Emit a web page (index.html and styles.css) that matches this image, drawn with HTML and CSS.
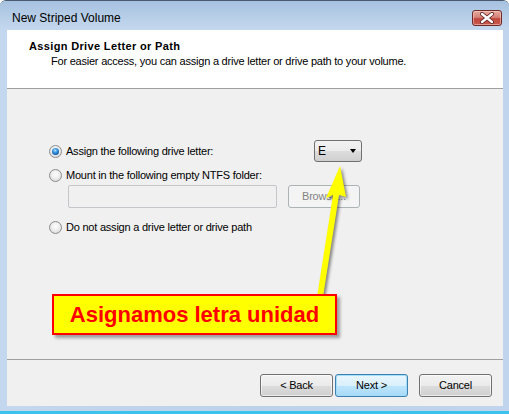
FILE: index.html
```html
<!DOCTYPE html>
<html>
<head>
<meta charset="utf-8">
<link rel="stylesheet" href="styles.css">
</head>
<body>
<div class="window">
  <div class="titlebar">
    <span class="title">New Striped Volume</span>
    <div class="close">
      <svg width="16" height="12" viewBox="0 0 16 12">
        <path d="M3 2 L13 10 M13 2 L3 10" stroke="#5a1f1f" stroke-width="4" stroke-linecap="round"/>
        <path d="M3 2 L13 10 M13 2 L3 10" stroke="#ffffff" stroke-width="2.4" stroke-linecap="round"/>
      </svg>
    </div>
  </div>
  <div class="client">
    <div class="header">
      <div class="h1">Assign Drive Letter or Path</div>
      <div class="h2">For easier access, you can assign a drive letter or drive path to your volume.</div>
    </div>
    <div class="body">
      <div class="row row1">
        <div class="opt"><span class="radio checked"></span><span>Assign the following drive letter:</span></div>
        <div class="select"><span>E</span><span class="caret"></span></div>
      </div>
      <div class="row row2">
        <div class="opt"><span class="radio"></span><span>Mount in the following empty NTFS folder:</span></div>
      </div>
      <div class="row row3">
        <div class="field"></div>
        <div class="btn disabled browse">Browse...</div>
      </div>
      <div class="row row4">
        <div class="opt"><span class="radio"></span><span>Do not assign a drive letter or drive path</span></div>
      </div>
    </div>
    <div class="footer">
      <div class="btn">&lt; Back</div>
      <div class="btn default">Next &gt;</div>
      <div class="btn cancel">Cancel</div>
    </div>
  </div>
  <svg class="arrow" width="509" height="414" viewBox="0 0 509 414">
    <polygon points="340,165 346,196 339,194 323,296 317,296 333,194 326,197" fill="#ffff00"/>
  </svg>
  <div class="callout">Asignamos letra unidad</div>
</div>
</body>
</html>
```
FILE: styles.css
```css
* { box-sizing: border-box; }
html, body { margin: 0; padding: 0; background: #ffffff; }
body { font-family: "Liberation Sans", Arial, sans-serif; }

.window {
  position: relative;
  width: 509px;
  height: 414px;
  display: flex;
  flex-direction: column;
  background: linear-gradient(to right, #c3d7ee, #bcd2eb 50%, #c0d5ed);
  border-top: 1px solid #4a5a6e;
  border-radius: 6px 6px 0 0;
  border-bottom: 3px solid #3cc3ea;
  padding-bottom: 5px;
  overflow: hidden;
}

.titlebar {
  height: 29px;
  display: flex;
  align-items: flex-start;
  background: linear-gradient(to bottom, #a6c1e0, #bcd2ea 70%, #c3d7ee);
}
.title {
  font-size: 12px;
  line-height: 14px;
  color: #000;
  padding: 10px 0 0 12px;
}
.close {
  margin-left: auto;
  margin-right: 7px;
  margin-top: 9px;
  width: 30px;
  height: 16px;
  border: 1px solid #6e2a2a;
  border-radius: 3px;
  background: linear-gradient(to bottom, #e6a89c, #d5837a 45%, #c0463e 55%, #c85a4e);
  display: flex;
  align-items: center;
  justify-content: center;
  box-shadow: inset 0 0 0 1px rgba(255,220,210,0.5);
}
.close svg { display: block; }

.client {
  margin: 0 6px 0 7px;
  height: 376px;
  background: #f0f0f0;
  display: flex;
  flex-direction: column;
  font-size: 11px;
  letter-spacing: -0.22px;
  color: #000;
}

.header {
  height: 59px;
  background: #ffffff;
  border-bottom: 1px solid #a0a0a0;
  padding: 10px 0 0 22px;
}
.h1 {
  font-weight: bold;
  font-size: 11px;
  line-height: 13px;
  letter-spacing: 0.35px;
}
.h2 {
  line-height: 13px;
  margin-top: 2px;
  padding-left: 22px;
}

.body {
  height: 271px;
  border-bottom: 1px solid #a0a0a0;
  padding: 51px 0 0 42px;
}
.row { display: flex; align-items: center; }
.row1 { height: 22px; }
.row2 { height: 16px; margin-top: 5px; }
.row3 { height: 23px; margin-top: 2px; padding-left: 19px; }
.row4 { height: 16px; margin-top: 11px; }

.opt { display: flex; align-items: center; gap: 4px; line-height: 13px; }
.row1 .opt { width: 265px; }

.radio {
  width: 13px;
  height: 13px;
  border-radius: 50%;
  border: 1px solid #8a8c8e;
  background: radial-gradient(circle at 50% 40%, #ffffff 0, #f0f0f0 40%, #d2d2d2 100%);
  display: flex;
  align-items: center;
  justify-content: center;
  flex: none;
}
.radio.checked::after {
  content: "";
  width: 7px;
  height: 7px;
  border-radius: 50%;
  background: radial-gradient(circle at 45% 35%, #b9e2ff 0, #3d97e0 35%, #0c5aa6 75%, #083f7a 100%);
}

.select {
  width: 48px;
  height: 22px;
  border: 1px solid #707070;
  border-radius: 3px;
  background: linear-gradient(to bottom, #f2f2f2, #ebebeb 50%, #dddddd 50%, #cfcfcf);
  display: flex;
  align-items: center;
  padding: 0 5px 0 3px;
  font-size: 12px;
}
.caret {
  margin-left: auto;
  width: 0;
  height: 0;
  border-left: 3.5px solid transparent;
  border-right: 3.5px solid transparent;
  border-top: 4px solid #000;
}

.field {
  width: 209px;
  height: 23px;
  border: 1px solid #c4c6ca;
  border-radius: 2px;
  background: #f0f0f0;
}

.btn {
  width: 73px;
  height: 23px;
  border: 1px solid #707070;
  border-radius: 3px;
  background: linear-gradient(to bottom, #f2f2f2, #ebebeb 50%, #dddddd 50%, #cfcfcf);
  display: flex;
  align-items: center;
  justify-content: center;
  line-height: 13px;
  box-shadow: inset 0 0 0 1px rgba(255,255,255,0.6);
}
.btn.disabled {
  border-color: #adb2b5;
  background: #f4f4f4;
  color: #838383;
  box-shadow: none;
}
.browse { margin-left: 11px; width: 72px; }

.footer {
  height: 45px;
  display: flex;
  justify-content: flex-end;
  align-items: flex-start;
  padding: 14px 11px 0 0;
}
.btn.default {
  margin-left: 2px;
  border-color: #3c7fb1;
  background: linear-gradient(to bottom, #eaf6fd, #d9f0fc 50%, #bee6fd 50%, #a7d9f5);
  box-shadow: inset 0 0 0 1px rgba(160,220,250,0.9);
}
.btn.cancel { margin-left: 11px; }

.arrow {
  position: absolute;
  left: 0;
  top: 0;
  pointer-events: none;
  filter: drop-shadow(2px 2px 1.5px rgba(0,0,0,0.45));
}

.callout {
  position: absolute;
  left: 52px;
  top: 293px;
  width: 285px;
  height: 41px;
  border: 2px solid #ff0000;
  background: #ffff00;
  color: #ff0000;
  font-weight: bold;
  font-size: 22px;
  line-height: 37px;
  text-align: center;
  box-shadow: 3px 3px 3px rgba(0,0,0,0.35);
}
```
